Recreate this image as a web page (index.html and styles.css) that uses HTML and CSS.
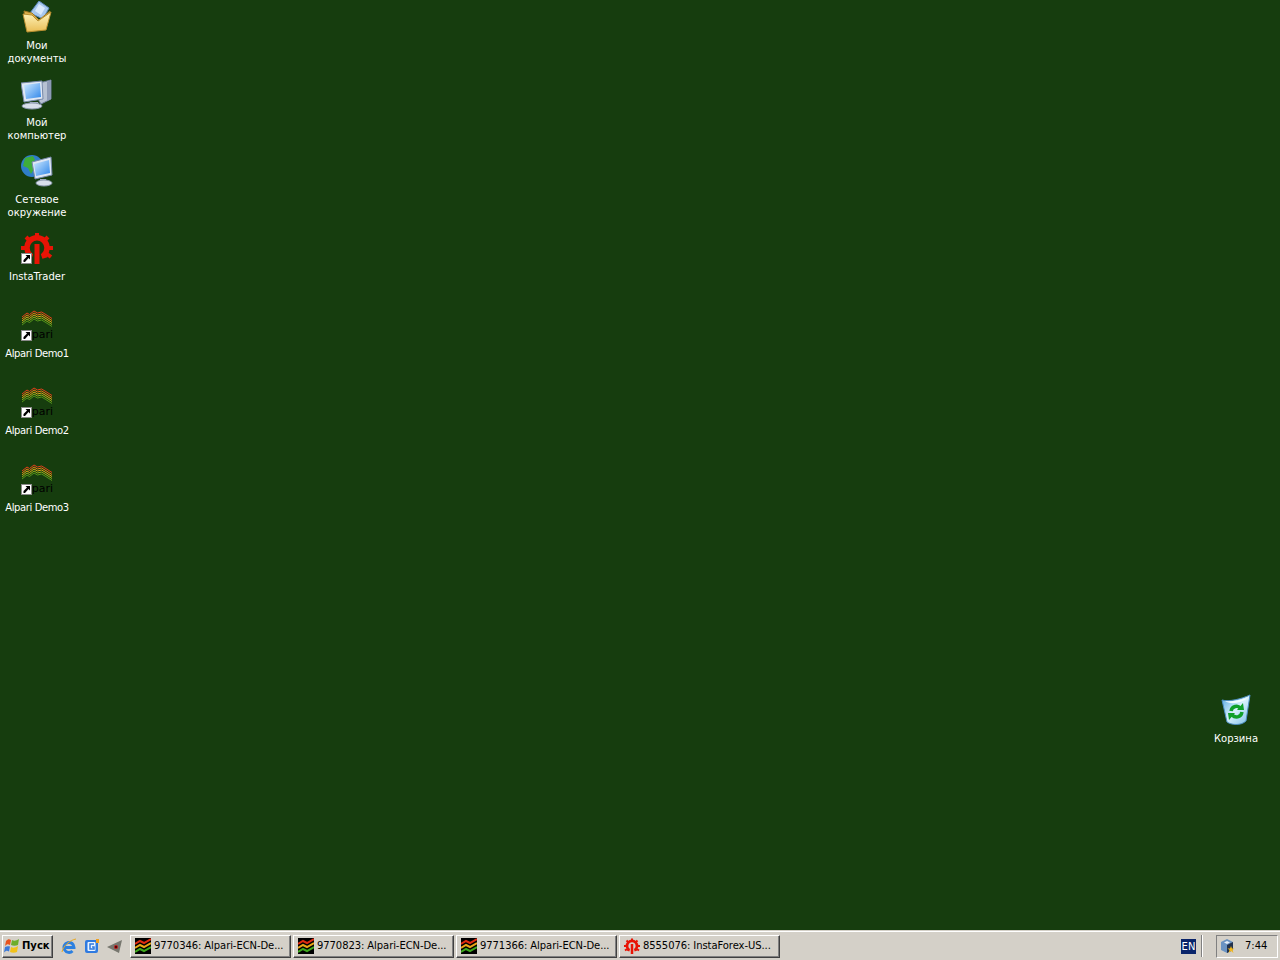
FILE: index.html
```html
<!DOCTYPE html>
<html lang="ru">
<head>
<meta charset="utf-8">
<title>Рабочий стол</title>
<link rel="stylesheet" href="styles.css">
</head>
<body>
<svg class="defs" width="0" height="0">
  <defs>
    <linearGradient id="scr" x1="0" y1="0" x2="1" y2="1"><stop offset="0" stop-color="#cfeaff"/><stop offset="1" stop-color="#2f86ea"/></linearGradient>
    <linearGradient id="fold" x1="0" y1="0" x2="0" y2="1"><stop offset="0" stop-color="#fff6c0"/><stop offset="1" stop-color="#e9bd55"/></linearGradient>
    <linearGradient id="bin" x1="0" y1="0" x2="1" y2="1"><stop offset="0" stop-color="#4ea6e2"/><stop offset=".5" stop-color="#d8f1fc"/><stop offset="1" stop-color="#79bde8"/></linearGradient>
    <symbol id="gear" viewBox="0 -1 32 32">
      <g fill="none" stroke="#e81405">
        <path stroke-width="5.500" d="M8 25L9 22A10 10 0 1 1 23 22L24 25"/>
        <path stroke-width="4" d="M16 0V4M5 4l3 3M27 4l-3 3M0 15H4M32 15H28M2 24l4-3M30 24l-4-3"/>
        <path stroke-width="5" d="M16 11V31"/>
      </g>
    </symbol>
    <symbol id="shortcut" viewBox="0 0 11 11">
      <rect x=".5" y=".5" width="10" height="10" fill="#fff" stroke="#8a8a8a"/>
      <path fill="#000" d="M4.500 2H9V6.500L7.500 5 4 9H2.500V7L6 3.500z"/>
    </symbol>
    <symbol id="waves" viewBox="0 0 32 18">
      <g fill="none" stroke-width="1">
        <path stroke="#e2401a" d="M1 8l5-4 2.500 1.500L13 2l3.500 2 4-1 3.500 2 7 4.500"/>
        <path stroke="#ea7a16" d="M1 10l5-4 2.500 1.500L13 4l3.500 2 4-1 3.500 2 7 4.500"/>
        <path stroke="#d9a81c" d="M1 12l5-4 2.500 1.500L13 6l3.500 2 4-1 3.500 2 7 4.500"/>
        <path stroke="#93ad1e" d="M1 14l5-4 2.500 1.500L13 8l3.500 2 4-1 3.500 2 7 4.500"/>
        <path stroke="#54951a" d="M1 16l5-4 2.500 1.500L13 10l3.500 2 4-1 3.500 2 7 4.500"/>
      </g>
    </symbol>
    <symbol id="chart" viewBox="0 0 16 16">
      <rect width="16" height="16" fill="#000"/>
      <g fill="none" stroke-width="2">
        <path stroke="#e02a10" d="M0 6l5-3 4 2 7-4"/>
        <path stroke="#e8a516" d="M0 10l5-3 4 2 7-4"/>
        <path stroke="#3ea81c" d="M0 14l5-3 4 2 7-4"/>
      </g>
    </symbol>
  </defs>
</svg>

<main class="desktop">
  <div class="icon-column">
    <div class="desk-item">
      <svg class="desk-icon" viewBox="0 0 32 32">
        <path fill="#a8c8ee" stroke="#5c86b8" d="M9 12L18 0l10 7-6 11z"/>
        <path fill="#d9e9fb" d="M14 10l4-7 6 4-4 7z"/>
        <path fill="#dcae4a" stroke="#a27a24" d="M3 10l8 2 7 7 11-9-4 18H6z"/>
        <path fill="url(#fold)" stroke="#b98f30" d="M2 13l9 1 6 6 13-9-5 18-19 2z"/>
      </svg>
      <span class="desk-label">Мои<br>документы</span>
    </div>
    <div class="desk-item">
      <svg class="desk-icon" viewBox="0 0 32 32">
        <path fill="#b7c1d2" stroke="#6f7f9b" d="M18 5l12-3v19l-10 5-2-3z"/>
        <path fill="#8d9ab5" d="M26 4l4-2v19l-4 2z"/>
        <path fill="#dfe7f4" stroke="#7688a8" d="M0 5l21-2 1 18-19 3z"/>
        <path fill="url(#scr)" d="M3 7l16-2 1 14-15 2z"/>
        <path fill="#a8b4c8" d="M9 24h8l1 2H8z"/>
        <ellipse cx="11" cy="28" rx="10" ry="3" fill="#d8dfea" stroke="#8b98ad"/>
      </svg>
      <span class="desk-label">Мой<br>компьютер</span>
    </div>
    <div class="desk-item">
      <svg class="desk-icon" viewBox="0 0 32 32">
        <circle cx="11" cy="11" r="11" fill="#2f7ec8"/>
        <path fill="#3fae3a" d="M4 3l8-2 2 4-3 4 2 5-3 5-3-6-5-2z"/>
        <path fill="#dfe7f4" stroke="#7688a8" d="M11 7l19-5 1 18-17 4z"/>
        <path fill="url(#scr)" d="M13 9l15-4 1 13-14 3z"/>
        <path fill="#a8b4c8" d="M19 24h6l1 3h-7z"/>
        <ellipse cx="23" cy="28" rx="8" ry="3" fill="#d8dfea" stroke="#8b98ad"/>
      </svg>
      <span class="desk-label">Сетевое<br>окружение</span>
    </div>
    <div class="desk-item">
      <div class="icon-stack">
        <svg class="desk-icon"><use href="#gear"/></svg>
        <svg class="badge"><use href="#shortcut"/></svg>
      </div>
      <span class="desk-label">InstaTrader</span>
    </div>
    <div class="desk-item">
      <div class="icon-stack">
        <div class="alpari"><svg class="alpari-waves"><use href="#waves"/></svg><span class="alpari-word">lpari</span></div>
        <svg class="badge"><use href="#shortcut"/></svg>
      </div>
      <span class="desk-label tight">Alpari Demo1</span>
    </div>
    <div class="desk-item">
      <div class="icon-stack">
        <div class="alpari"><svg class="alpari-waves"><use href="#waves"/></svg><span class="alpari-word">lpari</span></div>
        <svg class="badge"><use href="#shortcut"/></svg>
      </div>
      <span class="desk-label tight">Alpari Demo2</span>
    </div>
    <div class="desk-item">
      <div class="icon-stack">
        <div class="alpari"><svg class="alpari-waves"><use href="#waves"/></svg><span class="alpari-word">lpari</span></div>
        <svg class="badge"><use href="#shortcut"/></svg>
      </div>
      <span class="desk-label tight">Alpari Demo3</span>
    </div>
  </div>
  <div class="desk-item recycle">
    <svg class="desk-icon" viewBox="0 0 32 32">
      <path fill="url(#bin)" stroke="#4d8fc4" d="M2 6c7 2 19-1 28-5l-4 26c-5 5-15 4-19 1z"/>
      <path fill="#f2fbff" d="M5 7c6 1 15-1 22-3-4 5-17 7-22 3z"/>
      <path fill="none" stroke="#10a02a" stroke-width="3.500" d="M11 17c1-5 7-6 9-3M22 18c-1 6-7 6-10 3"/>
      <path fill="#10a02a" d="M17 16l7 0-1-7zM15 19l-7 0 1 7z"/>
    </svg>
    <span class="desk-label">Корзина</span>
  </div>
</main>

<footer class="taskbar">
  <button class="start"><svg class="flag" viewBox="0 0 16 16">
    <path fill="#e8531c" d="M2 3c2-2 3-2 5-1l-1 5c-2-1-3-1-5 1z"/>
    <path fill="#6dad2c" d="M8 2c2 1 4 1 7-1l-1 6c-2 1-5 1-7 0z"/>
    <path fill="#3a78d8" d="M1 9c2-1 3-1 5-.500l-1 5c-2-1-3-1-5 1z"/>
    <path fill="#f2c21a" d="M7 9c2 1 4 1 7-1l-1 6c-2 1-5 1-7 0z"/>
  </svg><span>Пуск</span></button>
  <div class="quick">
    <svg class="q-icon" viewBox="0 0 16 16">
      <path fill="none" stroke="#2b7fe0" stroke-width="3" d="M3 9.500h10a5 5 0 1 0-1.500 3.500"/>
      <path fill="none" stroke="#e8a820" d="M1 14C2 8 9 2 15 1"/>
    </svg>
    <svg class="q-icon" viewBox="0 0 16 16">
      <rect x="1" y="2" width="13" height="13" rx="2" fill="#2f7ae0"/>
      <rect x="3.500" y="4" width="8" height="9" rx="1" fill="#e9f3ff"/>
      <path fill="none" stroke="#2f7ae0" stroke-width="1.500" d="M10 6H6v5h4V9H8"/>
      <path fill="#f0a020" d="M12 1h3v4h-3z"/>
    </svg>
    <svg class="q-icon" viewBox="0 0 16 16">
      <path fill="#77776f" d="M0 9l15-7-3 13z"/>
      <circle cx="9" cy="9" r="2" fill="#c01818"/>
      <circle cx="9" cy="9" r="1" fill="#300"/>
    </svg>
  </div>
  <div class="tasks">
    <button class="task"><svg class="task-icon"><use href="#chart"/></svg><span class="task-text">9770346: Alpari-ECN-De...</span></button>
    <button class="task"><svg class="task-icon"><use href="#chart"/></svg><span class="task-text">9770823: Alpari-ECN-De...</span></button>
    <button class="task"><svg class="task-icon"><use href="#chart"/></svg><span class="task-text">9771366: Alpari-ECN-De...</span></button>
    <button class="task"><svg class="task-icon"><use href="#gear"/></svg><span class="task-text">8555076: InstaForex-US...</span></button>
  </div>
  <span class="lang">EN</span>
  <div class="separator"></div>
  <div class="tray">
    <svg class="tray-icon" viewBox="0 0 16 16">
      <path fill="#6b93c2" d="M8 1l6 3v8l-6 3-6-3V4z"/>
      <path fill="#22324e" d="M8 7l6-3v8l-6 3z"/>
      <path fill="#e6edf6" d="M8 3l3 1.500-3 1.500-3-1.500z"/>
      <path fill="#f4b81c" d="M12 8l1 2.500h2.500l-2 1.500 1 3-2.500-2-2.500 2 1-3-2-1.500H11z"/>
    </svg>
    <span class="clock">7:44</span>
  </div>
</footer>
</body>
</html>
```

FILE: styles.css
```css
html, body {
  margin: 0;
  height: 100%;
  overflow: hidden;
}

body {
  display: flex;
  flex-direction: column;
  width: 1280px;
  height: 960px;
  background: #163d0e;
  font-family: "DejaVu Sans", sans-serif;
  font-size: 10px;
}

.defs {
  position: absolute;
}

.desktop {
  position: relative;
  flex: 1;
}

.icon-column {
  display: flex;
  flex-direction: column;
  width: 74px;
}

.desk-item {
  display: flex;
  flex-direction: column;
  align-items: center;
  width: 74px;
  height: 77px;
  box-sizing: border-box;
  padding-top: 1px;
}

.desk-icon {
  display: block;
  width: 32px;
  height: 32px;
}

.desk-label {
  margin-top: 6px;
  color: #fff;
  font-size: 10px;
  line-height: 13px;
  text-align: center;
  white-space: nowrap;
}

.tight {
  letter-spacing: -0.4px;
}

.icon-stack {
  position: relative;
  width: 32px;
  height: 32px;
}

.badge {
  position: absolute;
  left: 0;
  bottom: 0;
  width: 11px;
  height: 11px;
}

.alpari {
  display: flex;
  flex-direction: column;
  align-items: flex-end;
  height: 32px;
  overflow: hidden;
}

.alpari-waves {
  display: block;
  flex: none;
  width: 32px;
  height: 18px;
}

.alpari-word {
  margin-top: 1px;
  color: #000;
  font-size: 11px;
  line-height: 13px;
}

.recycle {
  position: absolute;
  left: 1199px;
  top: 693px;
}

.taskbar {
  display: flex;
  align-items: center;
  flex: none;
  height: 30px;
  box-sizing: border-box;
  padding: 3px 2px 2px;
  background: #d4d0c8;
  border-top: 1px solid #d4d0c8;
  box-shadow: inset 0 1px 0 #fff;
  color: #000;
}

button {
  font: inherit;
  color: inherit;
  margin: 0;
  padding: 0;
  background: #d4d0c8;
}

.start,
.task {
  display: flex;
  align-items: center;
  height: 23px;
  box-sizing: border-box;
  border: 1px solid;
  border-color: #fff #404040 #404040 #fff;
  box-shadow: inset -1px -1px 0 #808080;
}

.start {
  width: 51px;
  padding-left: 1px;
  font-size: 10px;
  font-weight: bold;
  gap: 2px;
}

.start span,
.task-text,
.clock {
  position: relative;
  top: -1px;
}

.flag {
  width: 16px;
  height: 16px;
  flex: none;
}

.quick {
  display: flex;
  align-items: center;
  width: 77px;
  padding-left: 8px;
  gap: 7px;
  box-sizing: border-box;
}

.q-icon {
  width: 16px;
  height: 16px;
  flex: none;
}

.tasks {
  display: flex;
  gap: 2px;
  flex: 1;
}

.task {
  width: 161px;
  padding-left: 4px;
  gap: 3px;
}

.task-icon {
  width: 16px;
  height: 16px;
  flex: none;
}

.task-text {
  font-size: 10px;
  letter-spacing: -0.08px;
  white-space: nowrap;
}

.lang {
  width: 15px;
  height: 15px;
  margin-right: -1px;
  background: #0a246a;
  color: #fff;
  font-size: 10px;
  line-height: 15px;
  text-align: center;
}

.separator {
  width: 0;
  height: 22px;
  margin: 0 13px 0 6px;
  border-left: 1px solid #808080;
  border-right: 1px solid #fff;
}

.tray {
  display: flex;
  align-items: center;
  width: 62px;
  height: 23px;
  box-sizing: border-box;
  padding-left: 2px;
  border: 1px solid;
  border-color: #808080 #fff #fff #808080;
}

.tray-icon {
  width: 16px;
  height: 16px;
  flex: none;
}

.clock {
  margin-left: 10px;
  font-size: 10px;
}
```
